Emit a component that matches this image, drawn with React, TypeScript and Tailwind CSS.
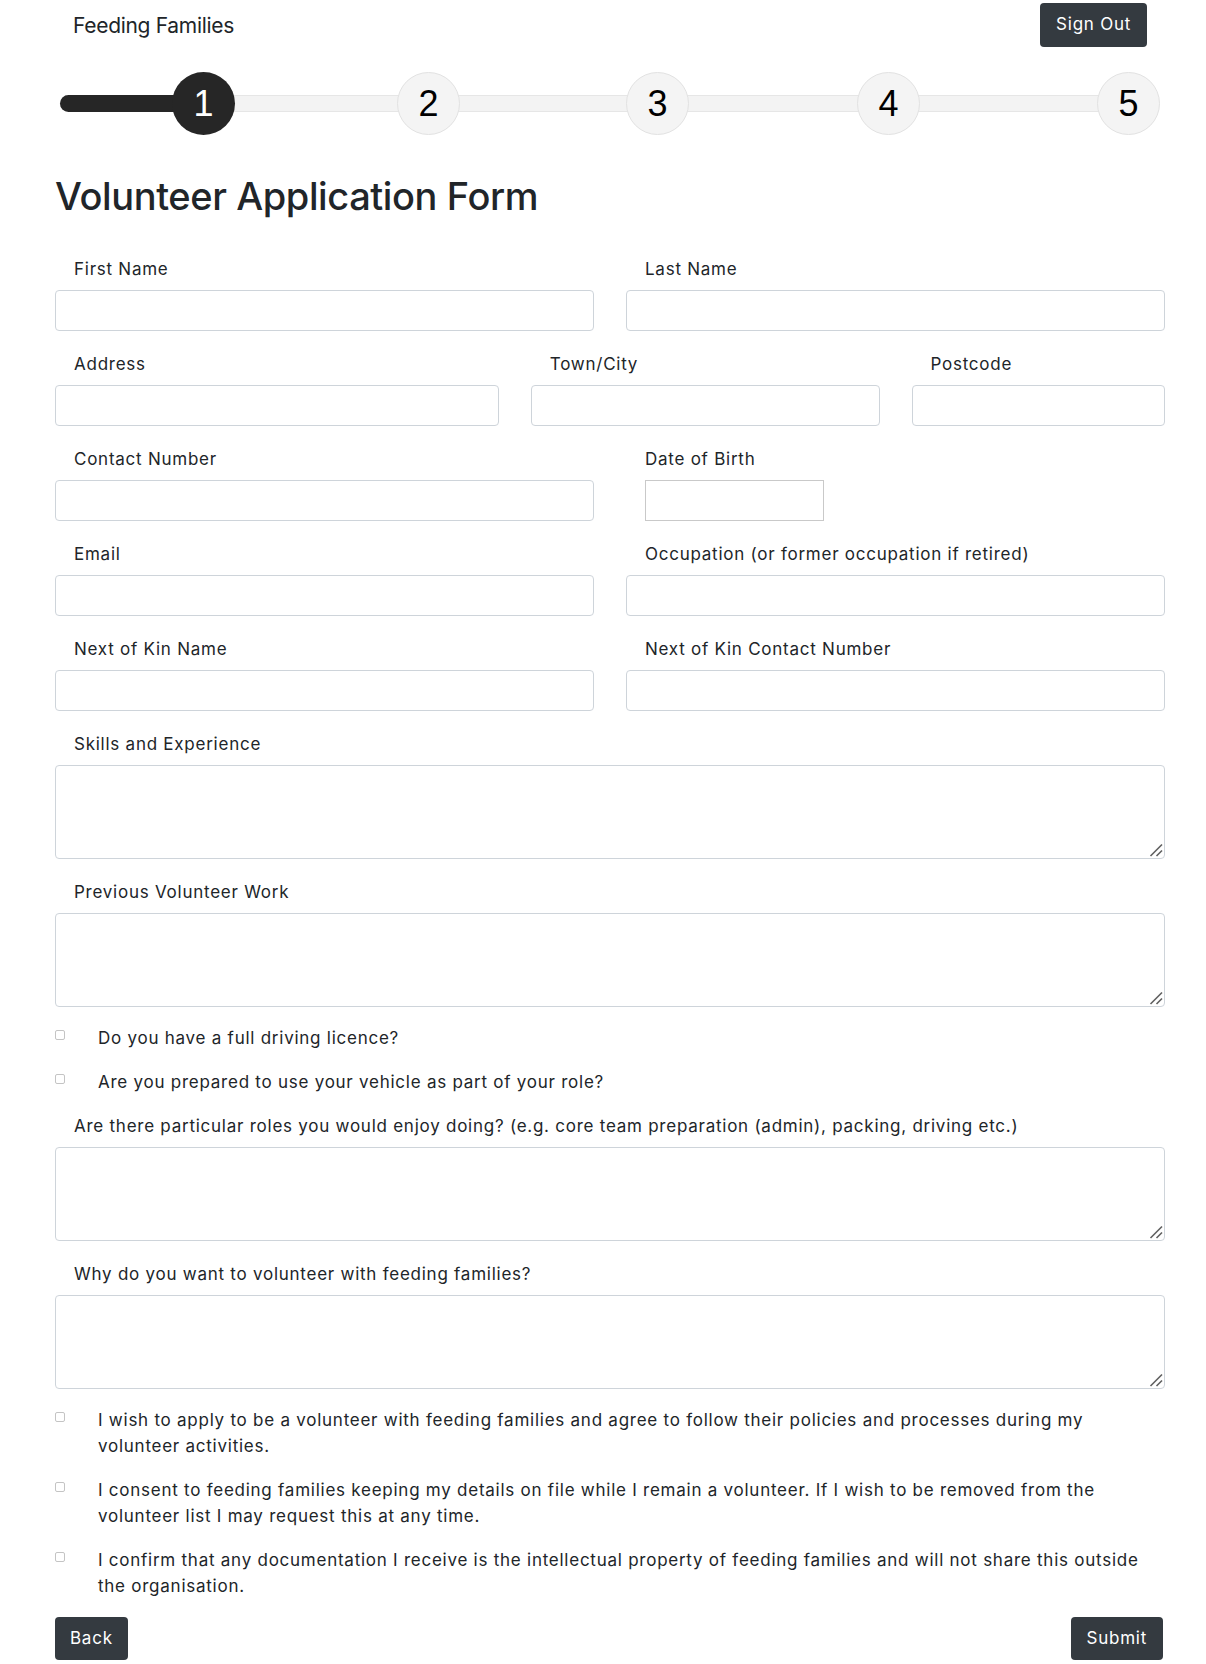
import React from "react";

const inputCls =
  "block w-full h-[41px] rounded-[4px] border border-[#ced4da] bg-white outline-none";
const labelCls = "block h-[26px] leading-[26px] mb-[8px] pl-[19px] text-[17px]";

function Area() {
  return (
    <div className="relative">
      <textarea className="block w-full h-[94px] rounded-[4px] border border-[#ced4da] bg-white outline-none resize-none" />
      <svg className="absolute right-[2px] bottom-[2px]" width="14" height="14" viewBox="0 0 14 14">
        <line x1="1.5" y1="13" x2="13" y2="1.5" stroke="#5f5f5f" strokeWidth="1.6" />
        <line x1="7.5" y1="13" x2="13" y2="7.5" stroke="#5f5f5f" strokeWidth="1.6" />
      </svg>
    </div>
  );
}

function Field({ label, span, children }: { label: string; span: string; children?: React.ReactNode }) {
  return (
    <div className={span + " mb-[20px]"}>
      <label className={labelCls}>{label}</label>
      {children ?? <input className={inputCls} />}
    </div>
  );
}

function Check({ lines }: { lines: string[] }) {
  return (
    <div className="flex items-start mb-[18px]">
      <span className="mt-[5px] block w-[10px] h-[10px] shrink-0 rounded-[2px] border border-[#c4c4c4] bg-white" />
      <div className="pl-[33px] text-[17px] leading-[26px]">
        {lines.map((l, i) => (
          <div key={i} className="whitespace-nowrap">
            {l}
          </div>
        ))}
      </div>
    </div>
  );
}

const steps = [
  { n: "1", left: "left-[117px]" },
  { n: "2", left: "left-[342px]" },
  { n: "3", left: "left-[571px]" },
  { n: "4", left: "left-[802px]" },
  { n: "5", left: "left-[1042px]" },
];

export default function App() {
  return (
    <div className="min-h-[1664px] bg-white text-[#212529] font-['Inter',sans-serif] tracking-[0.75px]">
      <div className="w-[1165px] pl-[55px]">
        {/* Navbar */}
        <nav className="flex items-center justify-between px-[18px] pt-[3px]">
          <span className="pt-[2px] text-[21px] leading-[30px] tracking-[-0.3px]">Feeding Families</span>
          <button className="h-[44px] px-[16px] rounded-[4px] bg-[#343a40] text-white text-[17px]">
            Sign Out
          </button>
        </nav>

        {/* Stepper */}
        <div className="relative h-[63px] mt-[25px] tracking-normal">
          <div className="absolute left-[5px] w-[1068px] top-[23px] h-[17px] rounded-full bg-[#f3f3f3] border border-[#e6e6e6]" />
          <div className="absolute left-[5px] w-[150px] top-[23px] h-[17px] rounded-full bg-[#262626]" />
          {steps.map((s, i) => (
            <div
              key={s.n}
              className={
                "absolute top-0 w-[63px] h-[63px] rounded-full flex items-center justify-center font-['Liberation_Sans',sans-serif] text-[36px] " +
                s.left +
                (i === 0
                  ? " bg-[#262626] text-white"
                  : " bg-[#f4f4f4] border border-[#e2e2e2] text-black")
              }
            >
              {s.n}
            </div>
          ))}
        </div>

        <h1 className="mt-[38px] mb-[37px] text-[38px] leading-[46px] font-medium tracking-[-0.4px]">
          Volunteer Application Form
        </h1>

        <form className="grid grid-cols-12 gap-x-[32px]">
          <Field label="First Name" span="col-span-6" />
          <Field label="Last Name" span="col-span-6" />
          <Field label="Address" span="col-span-5" />
          <Field label="Town/City" span="col-span-4" />
          <Field label="Postcode" span="col-span-3" />
          <Field label="Contact Number" span="col-span-6" />
          <Field label="Date of Birth" span="col-span-6">
            <div className="pl-[19px]">
              <input className="block w-[179px] h-[41px] border border-[#c9c9c9] bg-white outline-none" />
            </div>
          </Field>
          <Field label="Email" span="col-span-6" />
          <Field label="Occupation (or former occupation if retired)" span="col-span-6" />
          <Field label="Next of Kin Name" span="col-span-6" />
          <Field label="Next of Kin Contact Number" span="col-span-6" />
          <Field label="Skills and Experience" span="col-span-12">
            <Area />
          </Field>
          <Field label="Previous Volunteer Work" span="col-span-12">
            <Area />
          </Field>
          <div className="col-span-12 -mt-[2px]">
            <Check lines={["Do you have a full driving licence?"]} />
            <Check lines={["Are you prepared to use your vehicle as part of your role?"]} />
          </div>
          <Field
            label="Are there particular roles you would enjoy doing? (e.g. core team preparation (admin), packing, driving etc.)"
            span="col-span-12"
          >
            <Area />
          </Field>
          <Field label="Why do you want to volunteer with feeding families?" span="col-span-12">
            <Area />
          </Field>
          <div className="col-span-12 -mt-[2px]">
            <Check
              lines={[
                "I wish to apply to be a volunteer with feeding families and agree to follow their policies and processes during my",
                "volunteer activities.",
              ]}
            />
            <Check
              lines={[
                "I consent to feeding families keeping my details on file while I remain a volunteer. If I wish to be removed from the",
                "volunteer list I may request this at any time.",
              ]}
            />
            <Check
              lines={[
                "I confirm that any documentation I receive is the intellectual property of feeding families and will not share this outside",
                "the organisation.",
              ]}
            />
          </div>
          <div className="col-span-12 flex justify-between">
            <button type="button" className="h-[43px] px-[15px] rounded-[4px] bg-[#343a40] text-white text-[17px]">
              Back
            </button>
            <button type="button" className="h-[43px] px-[16px] rounded-[4px] bg-[#343a40] text-white text-[17px] mr-[2px]">
              Submit
            </button>
          </div>
        </form>
      </div>
    </div>
  );
}
